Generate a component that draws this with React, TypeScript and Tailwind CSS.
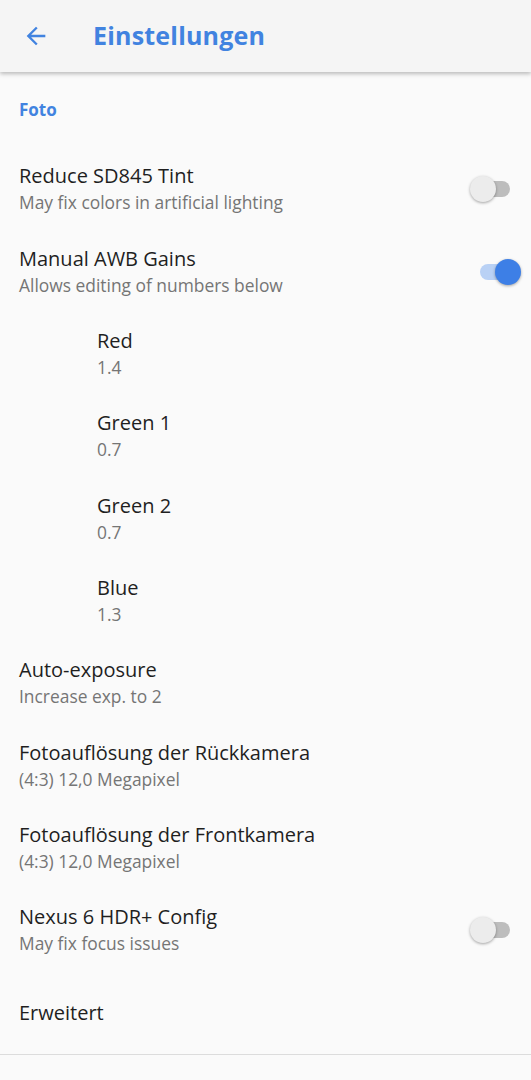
import React from "react";

type Row = { title: string; sub?: string; indent?: boolean; toggle?: "on" | "off" };

const rows: Row[] = [
  { title: "Reduce SD845 Tint", sub: "May fix colors in artificial lighting", toggle: "off" },
  { title: "Manual AWB Gains", sub: "Allows editing of numbers below", toggle: "on" },
  { title: "Red", sub: "1.4", indent: true },
  { title: "Green 1", sub: "0.7", indent: true },
  { title: "Green 2", sub: "0.7", indent: true },
  { title: "Blue", sub: "1.3", indent: true },
  { title: "Auto-exposure", sub: "Increase exp. to 2" },
  { title: "Fotoauflösung der Rückkamera", sub: "(4:3) 12,0 Megapixel" },
  { title: "Fotoauflösung der Frontkamera", sub: "(4:3) 12,0 Megapixel" },
  { title: "Nexus 6 HDR+ Config", sub: "May fix focus issues", toggle: "off" },
  { title: "Erweitert" },
];

const Switch = ({ on }: { on: boolean }) => {
  if (on) {
    return (
      <div className="relative w-[51px] h-[26px] flex items-center">
        <div className="absolute left-[10px] w-[30px] h-[16px] rounded-full bg-[#b9d1f5]" />
        <div className="absolute left-[25px] w-[26px] h-[26px] rounded-full bg-[#3d7fe6] shadow-[0_1px_3px_rgba(0,0,0,0.35)]" />
      </div>
    );
  }
  return (
    <div className="relative w-[51px] h-[26px] flex items-center">
      <div className="absolute left-[4px] w-[36px] h-[16px] rounded-full bg-[#bdbdbd]" />
      <div className="absolute left-0 w-[26px] h-[26px] rounded-full bg-[#ececec] shadow-[0_1px_3px_rgba(0,0,0,0.35)]" />
    </div>
  );
};

export default function App() {
  return (
    <div
      className="w-[531px] h-[1080px] bg-[#fafafa] overflow-hidden"
      style={{ fontFamily: '"Open Sans", "Noto Sans", sans-serif' }}
    >
      {/* Toolbar */}
      <header className="h-[72px] bg-[#f5f5f5] flex items-center shadow-[0_2px_4px_rgba(0,0,0,0.25)] relative z-10">
        <svg className="ml-[22px] w-[28px] h-[28px]" viewBox="0 0 24 24" fill="#4183e0">
          <path d="M20 11H7.83l5.59-5.59L12 4l-8 8 8 8 1.41-1.41L7.83 13H20v-2z" />
        </svg>
        <h1 className="ml-[43px] text-[25px] font-bold text-[#4183e0] tracking-[0.2px]">Einstellungen</h1>
      </header>

      {/* Category */}
      <div className="h-[76px] flex items-center px-[19px]">
        <span className="text-[17px] font-bold text-[#4183e0]">Foto</span>
      </div>

      {rows.map((r) => (
        <div
          key={r.title}
          className={`h-[82.35px] flex items-center pr-[10px] ${r.indent ? "pl-[97px]" : "pl-[19px]"}`}
        >
          <div className="flex-1 flex flex-col">
            <span className="text-[20px] leading-[26px] text-[#1f1f1f]">{r.title}</span>
            {r.sub && <span className="text-[17.4px] leading-[26px] text-[#757575]">{r.sub}</span>}
          </div>
          {r.toggle && <Switch on={r.toggle === "on"} />}
        </div>
      ))}

      <div className="h-px bg-[#dcdcdc]" />
    </div>
  );
}
